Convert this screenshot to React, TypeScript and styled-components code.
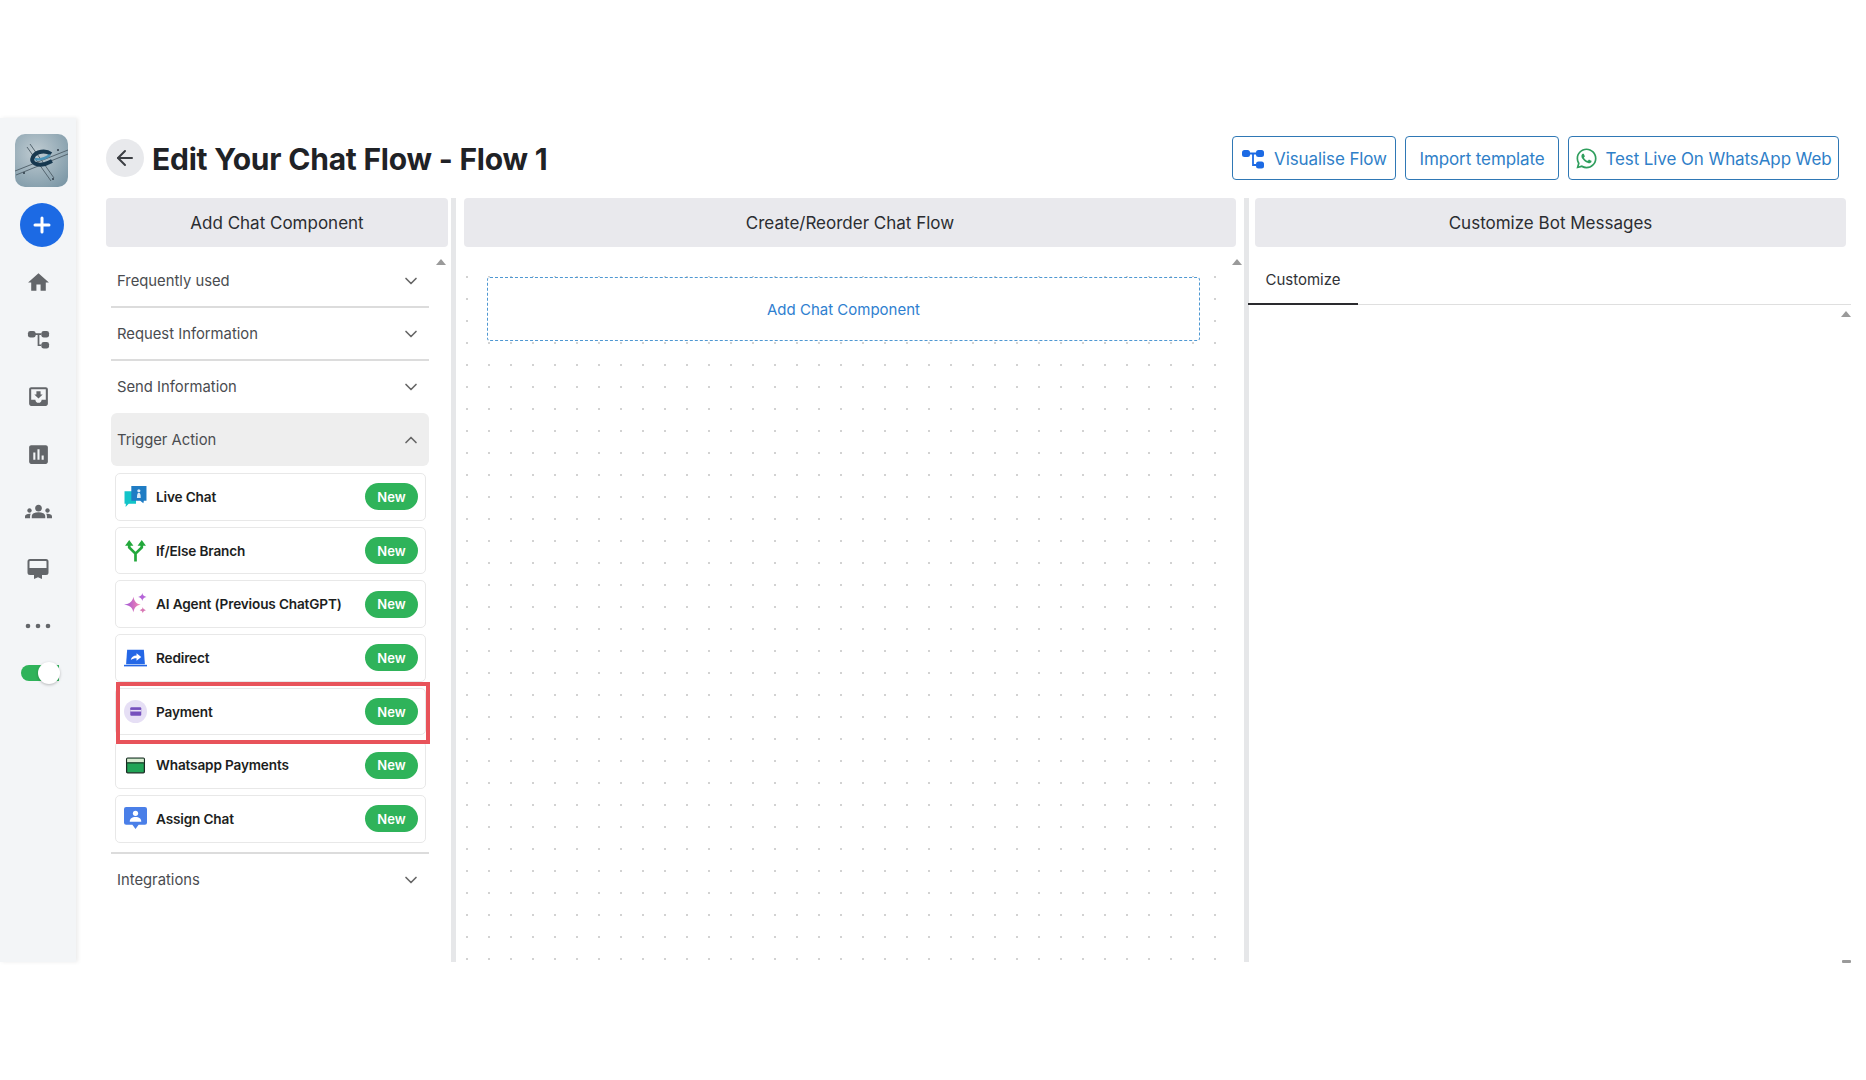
import React from "react"
import styled, { createGlobalStyle } from "styled-components"
import { ArrowLeft, ChevronDown, ChevronUp, Plus } from "lucide-react"
import { FaWhatsapp } from "react-icons/fa"
import { MdAssessment, MdGroups, MdHome, MdMoveToInbox } from "react-icons/md"

const GlobalStyle = createGlobalStyle`
  html, body {
    margin: 0;
    padding: 0;
    background: #fff;
    font-family: Inter, "Liberation Sans", sans-serif;
  }
  * { box-sizing: border-box; }
`

const Page = styled.div`
  width: 1866px;
  height: 1080px;
  padding-top: 118px;
  overflow: hidden;
`

const Shell = styled.div`
  display: flex;
  height: 844px;
`

const Sidebar = styled.aside`
  width: 76px;
  flex: none;
  background: #f3f5f7;
  box-shadow: 2px 0 4px rgba(0, 0, 0, 0.08);
  display: flex;
  flex-direction: column;
  padding-top: 16px;
`

const LogoBox = styled.div`
  width: 53px;
  height: 53px;
  margin-left: 15px;
  border-radius: 10px;
  overflow: hidden;
`

const AddButton = styled.button`
  width: 44px;
  height: 44px;
  margin: 16px 0 0 20px;
  border: none;
  border-radius: 50%;
  background: #1c6ae4;
  color: #fff;
  display: flex;
  align-items: center;
  justify-content: center;
  padding: 0;
`

const NavList = styled.nav`
  margin-top: 7px;
  display: flex;
  flex-direction: column;
`

const NavItem = styled.div`
  height: 57.2px;
  width: 76px;
  display: flex;
  align-items: center;
  justify-content: center;
  color: #63666a;
`

const Toggle = styled.div`
  position: relative;
  width: 38px;
  height: 16px;
  margin: 11px 0 0 21px;
  border-radius: 8px 0 0 8px;
  background: #2fb35a;
  &::after {
    content: "";
    position: absolute;
    right: -1px;
    top: -3px;
    width: 22px;
    height: 22px;
    border-radius: 50%;
    background: #fff;
    box-shadow: 0 1px 3px rgba(0, 0, 0, 0.25);
  }
`

const Main = styled.main`
  flex: 1;
  min-width: 0;
  padding: 18px 0 0 30px;
  display: flex;
  flex-direction: column;
`

const TopBar = styled.header`
  height: 44px;
  padding-right: 27px;
  display: flex;
  align-items: center;
  justify-content: space-between;
`

const TitleGroup = styled.div`
  display: flex;
  align-items: center;
  gap: 8px;
`

const BackButton = styled.button`
  width: 38px;
  height: 38px;
  padding: 0;
  border: none;
  border-radius: 50%;
  background: #e8e9ec;
  color: #3c3f44;
  display: flex;
  align-items: center;
  justify-content: center;
`

const Title = styled.h1`
  margin: 0;
  padding-top: 2px;
  font-size: 30px;
  line-height: 44px;
  font-weight: 700;
  color: #1f2226;
  letter-spacing: -0.22px;
`

const Actions = styled.div`
  display: flex;
  gap: 9px;
`

const ActionButton = styled.button<{ $width: number; $gap?: number }>`
  width: ${(p) => p.$width}px;
  height: 44px;
  padding: 1px 0 0;
  background: #fff;
  border: 1.5px solid #2f78b5;
  border-radius: 4px;
  color: #2f80c8;
  font: 400 17px Inter, "Liberation Sans", sans-serif;
  letter-spacing: -0.1px;
  white-space: nowrap;
  display: flex;
  align-items: center;
  justify-content: center;
  gap: ${(p) => p.$gap ?? 9}px;
`

const Columns = styled.div`
  flex: 1;
  min-height: 0;
  margin-top: 18px;
  display: grid;
  grid-template-columns: 350px 793px 1fr;
`

const Column = styled.section`
  position: relative;
  display: flex;
  flex-direction: column;
  min-height: 0;
`

const LeftColumn = styled(Column)`
  border-right: 5px solid #e6e7e9;
`

const CenterColumn = styled(Column)`
  border-right: 5px solid #e6e7e9;
  padding-left: 8px;
`

const ColumnHeader = styled.div<{ $marginRight: number; $marginLeft?: number }>`
  height: 49px;
  flex: none;
  margin-right: ${(p) => p.$marginRight}px;
  margin-left: ${(p) => p.$marginLeft ?? 0}px;
  border-radius: 4px;
  background: #e9e9ed;
  color: #2b2d31;
  font-size: 17px;
  display: flex;
  align-items: center;
  justify-content: center;
`

const ScrollUp = styled.span<{ $top: number; $left: number }>`
  position: absolute;
  top: ${(p) => p.$top}px;
  left: ${(p) => p.$left}px;
  width: 0;
  height: 0;
  border-left: 5px solid transparent;
  border-right: 5px solid transparent;
  border-bottom: 6px solid #9a9a9a;
`

const ScrollEnd = styled.span`
  position: absolute;
  bottom: -1px;
  right: 15px;
  width: 9px;
  height: 3px;
  border-radius: 1px;
  background: #9a9a9a;
`

const Accordion = styled.div`
  width: 318px;
  margin: 9px 0 0 5px;
  display: flex;
  flex-direction: column;
`

const AccordionRow = styled.div<{ $open?: boolean; $line?: boolean; $height?: number }>`
  height: ${(p) => p.$height ?? 53}px;
  flex: none;
  padding: 0 8px 0 6px;
  display: flex;
  align-items: center;
  justify-content: space-between;
  color: #4a4c50;
  font-size: 14.8px;
  border-bottom: ${(p) => (p.$line ? "2px solid #dcdcdc" : "none")};
  background: ${(p) => (p.$open ? "#eeeeee" : "transparent")};
  border-radius: ${(p) => (p.$open ? "6px" : "0")};
`

const CardList = styled.div`
  padding: 7px 3px 9px 4px;
  display: flex;
  flex-direction: column;
  gap: 6px;
  border-bottom: 2px solid #dcdcdc;
`

const Card = styled.div`
  position: relative;
  height: 47.7px;
  padding: 0 7px 0 8px;
  display: flex;
  align-items: center;
  gap: 9px;
  background: #fff;
  border: 1px solid #e8e8e8;
  border-radius: 5px;
`

const CardIcon = styled.span`
  width: 23px;
  height: 23px;
  flex: none;
  display: flex;
  svg {
    width: 100%;
    height: 100%;
  }
`

const CardLabel = styled.span`
  flex: 1;
  font-size: 13.6px;
  font-weight: 600;
  letter-spacing: -0.15px;
  color: #1c1e21;
  white-space: nowrap;
`

const Badge = styled.span`
  width: 53px;
  height: 27px;
  flex: none;
  border-radius: 14px;
  background: #2fb35a;
  color: #fff;
  font-size: 13px;
  font-weight: 600;
  display: flex;
  align-items: center;
  justify-content: center;
`

const Highlight = styled.span`
  position: absolute;
  z-index: 2;
  top: -7px;
  bottom: -10px;
  left: 0;
  right: -5px;
  border: 4px solid #e8535a;
  pointer-events: none;
`

const Canvas = styled.div`
  width: 774px;
  flex: 1;
  margin: 14px 0 0 -8px;
  padding: 16px 30px 0 31px;
  background-image: radial-gradient(circle, #d2d2d2 1px, transparent 1.3px);
  background-size: 22px 22px;
  background-position: 0 5px;
`

const DropZone = styled.div`
  height: 64px;
  border: 1.5px dashed #4f98d2;
  border-radius: 3px;
  background: #fff;
  color: #2f80d0;
  font-size: 15px;
  display: flex;
  align-items: center;
  justify-content: center;
`

const TabRow = styled.div`
  height: 58px;
  flex: none;
  margin: 0 15px 0 -1px;
  border-bottom: 1px solid #dfdfdf;
  display: flex;
`

const Tab = styled.div`
  width: 110px;
  height: 58px;
  padding-top: 9px;
  border-bottom: 2px solid #2a2a2e;
  color: #303236;
  font-size: 15px;
  display: flex;
  align-items: center;
  justify-content: center;
`

const FlowIcon = ({ size, color }: { size: number; color: string }) => (
  <svg width={size} height={size} viewBox="0 0 24 24" fill="none">
    <path d="M7 6.500h5V18h3M12 6.500h3" stroke={color} strokeWidth="1.800" />
    <rect x="1" y="3" width="8" height="7" rx="2.500" fill={color} />
    <rect x="15" y="3" width="8" height="7" rx="2.500" fill={color} />
    <rect x="15" y="14.500" width="8" height="7" rx="2.500" fill={color} />
  </svg>
)

const MonitorIcon = () => (
  <svg width="24" height="24" viewBox="0 0 24 24" fill="none">
    <rect x="2.500" y="3" width="19" height="14" rx="1.500" stroke="#63666a" strokeWidth="2" />
    <path d="M3 11h18v5.500H3z" fill="#63666a" />
    <path d="M8 17h8v5l-4-1.800L8 22z" fill="#63666a" />
  </svg>
)

const DotsIcon = () => (
  <svg width="26" height="24" viewBox="0 0 26 24" fill="#63666a">
    <circle cx="3" cy="12" r="2.300" />
    <circle cx="13" cy="12" r="2.300" />
    <circle cx="23" cy="12" r="2.300" />
  </svg>
)

const Logo = () => (
  <svg width="53" height="53" viewBox="0 0 53 53">
    <defs>
      <radialGradient id="logoBg" cx="40%" cy="35%" r="80%">
        <stop offset="0" stopColor="#c0ccd2" />
        <stop offset="1" stopColor="#7b97a6" />
      </radialGradient>
    </defs>
    <rect width="53" height="53" fill="url(#logoBg)" />
    <g stroke="#55656f" strokeWidth="1" fill="none">
      <path d="M15 10l24 34M12 13l24 34" />
      <path d="M0 37l53-21M1 41l52-21" />
    </g>
    <g fill="#2c3a46">
      <circle cx="43" cy="16" r="1" />
      <circle cx="9" cy="39" r="1" />
      <circle cx="38" cy="45" r="1" />
    </g>
    <path d="M36 20c-5-4-15-3-18 3-3 6 4 9 12 7 3-1 5-2 7-3" fill="none" stroke="#17384f" strokeWidth="4" />
    <path d="M20 25c5 1 11-1 15-4" fill="none" stroke="#4a93b8" strokeWidth="2.400" />
  </svg>
)

const LiveChatIcon = () => (
  <svg viewBox="0 0 22 22">
    <path d="M.5 6h11v12H4.500L1.500 21l.3-3H.5z" fill="#12c4c9" />
    <path d="M7 1h14.500v14H19l-.5 2.500-3-2.500H7z" fill="#1f7cc4" />
    <circle cx="14.200" cy="5.500" r="1.500" fill="#dbeaf5" />
    <path d="M12.400 12.500c0-3.500.6-5 1.800-5s1.800 1.500 1.800 5z" fill="#dbeaf5" />
  </svg>
)

const BranchIcon = () => (
  <svg viewBox="0 0 22 22" fill="none">
    <path d="M11 21.500V14M11 14L5 8V4M11 14l6-6V4" stroke="#23a83c" strokeWidth="2.600" />
    <path d="M1 6.500L5 1l4 5.500zM13 6.500L17 1l4 5.500z" fill="#23a83c" />
  </svg>
)

const SparkIcon = () => (
  <svg viewBox="0 0 22 22">
    <defs>
      <linearGradient id="spark" x1="0" y1="0.500" x2="1" y2="0.500">
        <stop offset="0" stopColor="#9b4fd8" />
        <stop offset="1" stopColor="#f98bb0" />
      </linearGradient>
    </defs>
    <path d="M9 3.500c.9 4.500 2.500 6.600 7 7.500-4.500.9-6.100 3-7 7.500-.9-4.500-3-6.600-9-7.500 6-.9 8.100-3 9-7.500z" fill="url(#spark)" />
    <path d="M17.500 0c.4 2.200 1.300 3.100 4 3.800-2.700.7-3.600 1.600-4 3.800-.4-2.200-1.300-3.100-4-3.800 2.700-.7 3.600-1.600 4-3.800z" fill="#b565d8" />
    <path d="M18 13.500c.3 1.700 1 2.400 3 2.900-2 .5-2.700 1.200-3 2.900-.3-1.700-1-2.400-3-2.900 2-.5 2.700-1.200 3-2.900z" fill="#d878b4" />
  </svg>
)

const RedirectIcon = () => (
  <svg viewBox="0 0 22 22">
    <path d="M3 3.500h16l1 14H2z" fill="#2467e6" />
    <rect x="0" y="18" width="22" height="1.500" fill="#2467e6" />
    <path d="M6.500 13.500c.5-2.800 2.500-4.300 5.500-4.300V7l4.500 3.500-4.500 3.500v-2.300c-2.200 0-4 .6-5.500 1.800z" fill="#fff" />
  </svg>
)

const PaymentIcon = () => (
  <svg viewBox="0 0 22 22">
    <circle cx="11" cy="11" r="11" fill="#e6dff5" />
    <rect x="6" y="7" width="10.500" height="8" rx="1" fill="#7650bd" />
    <rect x="6" y="9.500" width="10.500" height="1.500" fill="#e6dff5" />
  </svg>
)

const WalletIcon = () => (
  <svg viewBox="0 0 22 22">
    <rect x="2.500" y="4" width="17" height="14" rx="1" fill="#21a456" stroke="#1a2b22" strokeWidth="1.200" />
    <rect x="3" y="4.500" width="16" height="3.500" fill="#d8ead0" />
    <rect x="3" y="8" width="16" height="1" fill="#1a2b22" />
  </svg>
)

const AssignIcon = () => (
  <svg viewBox="0 0 22 22">
    <path d="M2 0h18a2 2 0 012 2v13a2 2 0 01-2 2h-6l-3 4-3-4H2a2 2 0 01-2-2V2a2 2 0 012-2z" fill="#4a7fe8" />
    <circle cx="11" cy="6" r="2.500" fill="#fff" />
    <path d="M5.500 14c0-3 2-4.500 5.500-4.500s5.500 1.500 5.500 4.500z" fill="#fff" />
  </svg>
)

const triggers = [
  { label: "Live Chat", icon: <LiveChatIcon /> },
  { label: "If/Else Branch", icon: <BranchIcon /> },
  { label: "AI Agent (Previous ChatGPT)", icon: <SparkIcon /> },
  { label: "Redirect", icon: <RedirectIcon /> },
  { label: "Payment", icon: <PaymentIcon />, marked: true },
  { label: "Whatsapp Payments", icon: <WalletIcon /> },
  { label: "Assign Chat", icon: <AssignIcon /> },
]

export default function App() {
  return (
    <Page>
      <GlobalStyle />
      <Shell>
        <Sidebar>
          <LogoBox>
            <Logo />
          </LogoBox>
          <AddButton>
            <Plus size={24} strokeWidth={3} />
          </AddButton>
          <NavList>
            <NavItem><MdHome size={25} /></NavItem>
            <NavItem><FlowIcon size={23} color="#63666a" /></NavItem>
            <NavItem><MdMoveToInbox size={25} /></NavItem>
            <NavItem><MdAssessment size={25} /></NavItem>
            <NavItem><MdGroups size={27} /></NavItem>
            <NavItem><MonitorIcon /></NavItem>
            <NavItem><DotsIcon /></NavItem>
          </NavList>
          <Toggle />
        </Sidebar>
        <Main>
          <TopBar>
            <TitleGroup>
              <BackButton>
                <ArrowLeft size={24} strokeWidth={2} />
              </BackButton>
              <Title>Edit Your Chat Flow - Flow 1</Title>
            </TitleGroup>
            <Actions>
              <ActionButton $width={164}>
                <FlowIcon size={24} color="#1c6ae4" />
                Visualise Flow
              </ActionButton>
              <ActionButton $width={154}>Import template</ActionButton>
              <ActionButton $width={271} $gap={7}>
                <FaWhatsapp size={23} color="#2f9e5d" />
                Test Live On WhatsApp Web
              </ActionButton>
            </Actions>
          </TopBar>
          <Columns>
            <LeftColumn>
              <ColumnHeader $marginRight={3}>Add Chat Component</ColumnHeader>
              <ScrollUp $top={61} $left={330} />
              <Accordion>
                <AccordionRow $line $height={52}>
                  Frequently used
                  <ChevronDown size={20} color="#666" />
                </AccordionRow>
                <AccordionRow $line>
                  Request Information
                  <ChevronDown size={20} color="#666" />
                </AccordionRow>
                <AccordionRow $height={52}>
                  Send Information
                  <ChevronDown size={20} color="#666" />
                </AccordionRow>
                <AccordionRow $open>
                  Trigger Action
                  <ChevronUp size={20} color="#666" />
                </AccordionRow>
                <CardList>
                  {triggers.map((t) => (
                    <Card key={t.label}>
                      <CardIcon>{t.icon}</CardIcon>
                      <CardLabel>{t.label}</CardLabel>
                      <Badge>New</Badge>
                      {t.marked && <Highlight />}
                    </Card>
                  ))}
                </CardList>
                <AccordionRow>
                  Integrations
                  <ChevronDown size={20} color="#666" />
                </AccordionRow>
              </Accordion>
            </LeftColumn>
            <CenterColumn>
              <ColumnHeader $marginRight={8}>Create/Reorder Chat Flow</ColumnHeader>
              <ScrollUp $top={61} $left={776} />
              <Canvas>
                <DropZone>Add Chat Component</DropZone>
              </Canvas>
            </CenterColumn>
            <Column>
              <ColumnHeader $marginRight={20} $marginLeft={6}>Customize Bot Messages</ColumnHeader>
              <TabRow>
                <Tab>Customize</Tab>
              </TabRow>
              <ScrollUp $top={113} $left={592} />
              <ScrollEnd />
            </Column>
          </Columns>
        </Main>
      </Shell>
    </Page>
  )
}
